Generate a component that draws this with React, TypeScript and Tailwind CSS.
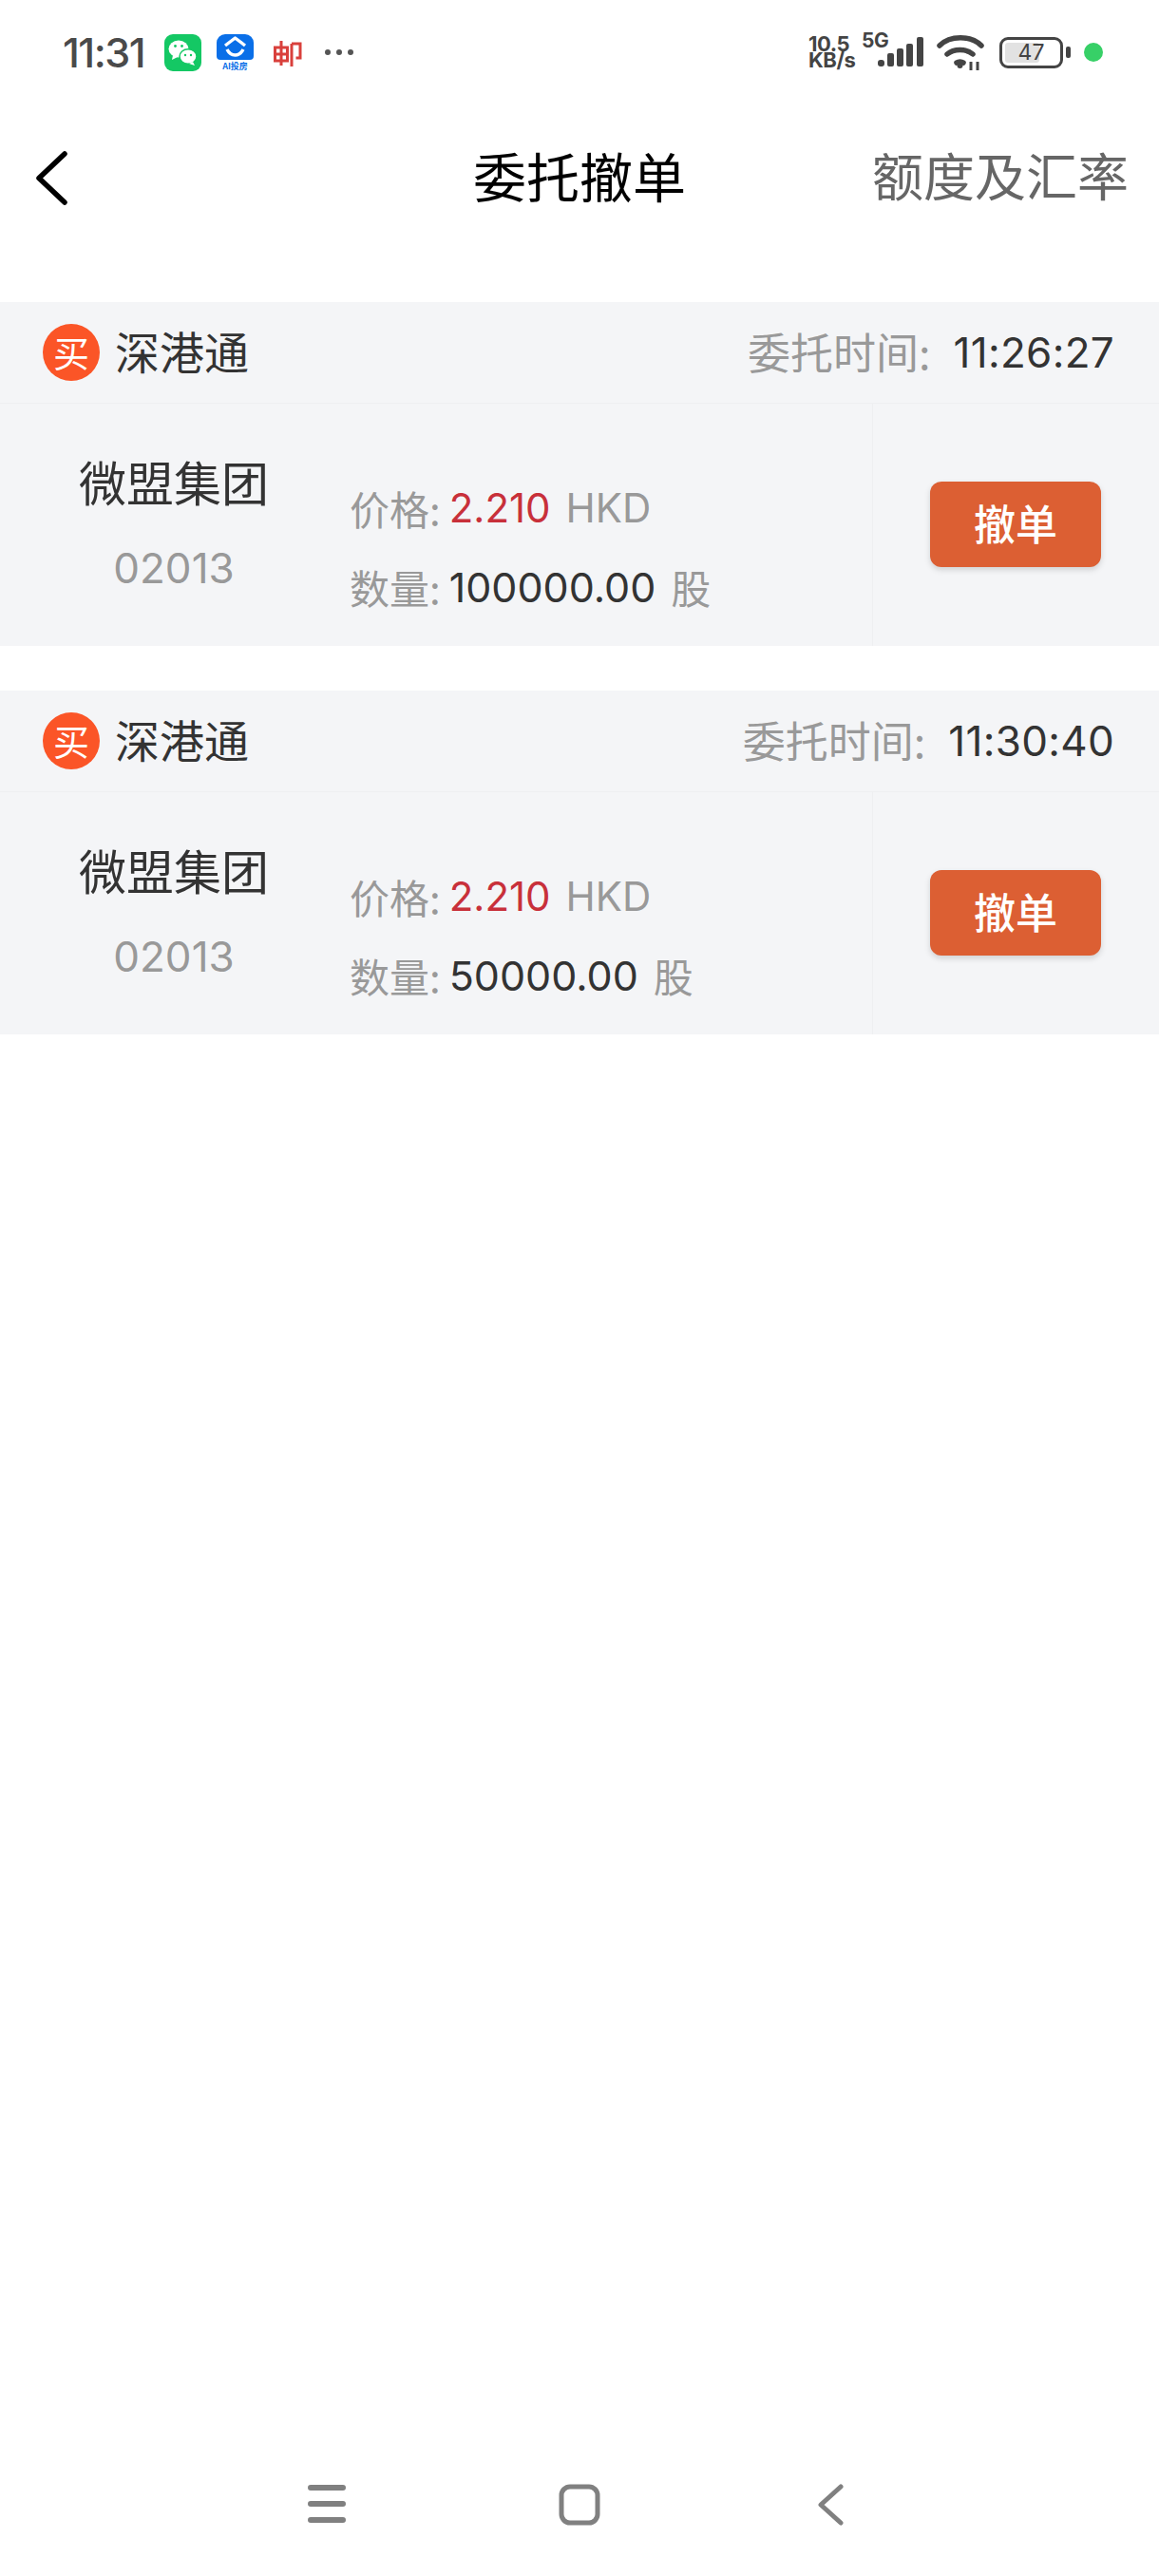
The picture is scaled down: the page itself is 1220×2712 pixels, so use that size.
const CJK = "font-['Noto_Sans_CJK_SC','Noto_Sans',sans-serif]";
const NUM = "font-['Inter','Noto_Sans_CJK_SC',sans-serif]";

const WeChatIcon = () => (
  <svg width="39" height="39" viewBox="0 0 39 39">
    <rect width="39" height="39" rx="9" fill="#14c864" />
    <ellipse cx="15" cy="15.500" rx="10.500" ry="9" fill="#fff" />
    <path d="M9 22l-1 5 6-3z" fill="#fff" />
    <ellipse cx="25" cy="23.500" rx="9" ry="7.800" fill="#fff" stroke="#14c864" strokeWidth="1.500" />
    <path d="M30 29l2 4-6-2z" fill="#fff" />
    <circle cx="11.500" cy="12.500" r="1.400" fill="#14c864" />
    <circle cx="18.500" cy="12.500" r="1.400" fill="#14c864" />
    <circle cx="22" cy="22" r="1.200" fill="#14c864" />
    <circle cx="28" cy="22" r="1.200" fill="#14c864" />
  </svg>
);

const AiHouseIcon = () => (
  <div className="relative w-[39px] h-[39px] rounded-[9px] bg-white overflow-hidden">
    <div className="h-[27px] bg-[#0a6fe8] rounded-b-[4px]" />
    <svg className="absolute left-0 top-0" width="39" height="28" viewBox="0 0 39 28">
      <path d="M9 12l10.500-8 10.500 8M11 16c2 4 5 6 8.500 6s6.500-2 8.500-6" fill="none" stroke="#fff" strokeWidth="3.400" strokeLinejoin="round" />
    </svg>
    <p className={`${CJK} absolute left-0 right-0 bottom-[0px] text-center text-[9px] leading-[11px] font-bold text-[#0a6fe8]`}>
      AI投房
    </p>
  </div>
);

const PostIcon = () => (
  <svg width="39" height="39" viewBox="0 0 39 39">
    <rect width="39" height="39" rx="9" fill="#fff" />
    <g fill="none" stroke="#d9403c" strokeWidth="3">
      <path d="M6.500 14h13v14h-13zM6.500 21h13M13 7v26" />
      <path d="M24 10h9v15h-4.500M24 10v24" />
    </g>
  </svg>
);

const StatusBar = () => (
  <div className="h-[110px] flex items-center pl-[66px] text-[#444]">
    <span className={`${NUM} text-[43px] font-medium leading-none tracking-[-1.5px] w-[107px] text-[#4a4a4a]`}>11:31</span>
    <WeChatIcon />
    <div className="ml-[16px]">
      <AiHouseIcon />
    </div>
    <div className="ml-[16px]">
      <PostIcon />
    </div>
    <div className="ml-[20px] flex gap-[6px]">
      <span className="size-[6px] rounded-full bg-[#555]" />
      <span className="size-[6px] rounded-full bg-[#555]" />
      <span className="size-[6px] rounded-full bg-[#555]" />
    </div>
    <p className={`${NUM} ml-[479px] w-[56px] font-bold text-[22px] leading-[17px] tracking-[-0.5px] text-[#444]`}>
      10.5
      <br />
      KB/s
    </p>
    <div className="relative w-[65px] h-[40px]">
      <span className={`${NUM} absolute left-0 top-[-1px] text-[21px] leading-[18px] font-bold tracking-[-0.5px]`}>5G</span>
      <svg className="absolute left-[17px] top-[3px]" width="48" height="34" viewBox="0 0 48 34" fill="#444">
        <rect x="0" y="25" width="7" height="7" rx="3" />
        <rect x="10" y="18" width="7" height="14" rx="2" />
        <rect x="20" y="13" width="7" height="19" rx="2" />
        <rect x="30" y="8" width="7" height="24" rx="2" />
        <rect x="41" y="1" width="7" height="31" rx="2" />
      </svg>
    </div>
    <svg className="ml-[14px]" width="50" height="38" viewBox="0 0 50 38" fill="none" stroke="#444" strokeWidth="5.500" strokeLinecap="round">
      <path d="M3 12C14 1 36 1 47 12" />
      <path d="M11 21c7-6 20-6 27 0" />
      <path d="M21 30c2-1.500 5-1.500 7 0" />
      <circle cx="24.500" cy="33" r="3" fill="#444" stroke="none" />
      <path d="M36 29v9M43 29v9" strokeWidth="3" strokeLinecap="butt" />
    </svg>
    <div className="ml-[16px] w-[67px] h-[33px] rounded-[9px] border-[3px] border-[#444] p-[3px] relative flex items-center">
      <div className="h-full w-[36px] rounded-[3px] bg-[#e2e2e2]" />
      <span className={`${NUM} absolute inset-0 text-center text-[23px] leading-[27px] text-[#444]`}>47</span>
    </div>
    <div className="ml-[3px] w-[5px] h-[12px] rounded-[2px] bg-[#444]" />
    <div className="ml-[14px] size-[20px] rounded-full bg-[#37d067]" />
  </div>
);

const NavBar = () => (
  <div className="h-[154px] grid grid-cols-[1fr_auto_1fr] items-center">
    <svg className="ml-[36px]" width="38" height="60" viewBox="0 0 38 60" fill="none" stroke="#000" strokeWidth="5.500" strokeLinecap="round" strokeLinejoin="round">
      <path d="M32 5L5 30.500 32 56" />
    </svg>
    <h1 className={`${CJK} pb-[6px] text-[56px] leading-none text-black`}>委托撤单</h1>
    <p className={`${CJK} justify-self-end pb-[6px] pr-[32px] text-[54px] leading-none text-[#666]`}>额度及汇率</p>
  </div>
);

type Order = { time: string; qty: string };

const OrderCard = ({ time, qty }: Order) => (
  <div className={`${CJK} h-[362px] bg-[#f4f5f7] flex flex-col`}>
    <div className="h-[107px] shrink-0 border-b border-[#eeeff1] flex items-center pl-[45px] pr-[47px]">
      <div className="size-[60px] rounded-full bg-[#fb5527] flex items-center justify-center pb-[3px] text-[38px] leading-none text-white">
        买
      </div>
      <span className="ml-[16px] pb-[5px] text-[47px] leading-none text-[#333]">深港通</span>
      <span className="ml-auto pb-[3px] text-[45px] leading-none text-[#999]">委托时间:</span>
      <span className={`${NUM} ml-[24px] pb-[1px] text-[44px] leading-none tracking-[0.3px] text-[#333]`}>{time}</span>
    </div>
    <div className="flex-1 flex">
      <div className="w-[366px] flex flex-col items-center pt-[49px]">
        <span className="text-[50px] leading-[64px] text-[#333]">微盟集团</span>
        <span className={`${NUM} mt-[33px] text-[44px] leading-[54px] text-[#999]`}>02013</span>
      </div>
      <div className="w-[553px] border-r border-[#eeeff1] pl-[2px] pt-[84px] flex flex-col gap-[31px]">
        <div className="flex items-center h-[52px]">
          <span className="text-[42px] leading-none text-[#999]">价格:</span>
          <span className={`${NUM} ml-[9px] text-[42px] leading-none text-[#c8303a]`}>2.210</span>
          <span className={`${NUM} ml-[16px] text-[42px] leading-none text-[#999]`}>HKD</span>
        </div>
        <div className="flex items-center h-[52px]">
          <span className="text-[42px] leading-none text-[#999]">数量:</span>
          <span className={`${NUM} ml-[9px] text-[43px] leading-none text-[#333]`}>{qty}</span>
          <span className="ml-[16px] text-[42px] leading-none text-[#999]">股</span>
        </div>
      </div>
      <div className="flex-1 flex items-center pl-[60px]">
        <button className="w-[180px] h-[90px] rounded-[12px] bg-[#dc5f33] mb-[1px] pb-[4px] text-white text-[44px] leading-none font-medium shadow-[0_3px_6px_rgba(0,0,0,0.15)]">
          撤单
        </button>
      </div>
    </div>
  </div>
);

const BottomBar = () => (
  <div className="mt-auto h-[138px] flex items-start pt-[41px] pl-[324px]">
    <svg width="40" height="42" viewBox="0 0 40 42" fill="none" stroke="#808080" strokeWidth="6" strokeLinecap="round">
      <path d="M3 4h34M3 21h34M3 38h34" />
    </svg>
    <svg className="ml-[224px]" width="44" height="44" viewBox="0 0 44 44" fill="none" stroke="#808080" strokeWidth="5">
      <rect x="3" y="3" width="38" height="38" rx="9" />
    </svg>
    <svg className="ml-[227px]" width="30" height="44" viewBox="0 0 30 44" fill="none" stroke="#808080" strokeWidth="5" strokeLinecap="round" strokeLinejoin="round">
      <path d="M26 3L5 22l21 19" />
    </svg>
  </div>
);

export default function App() {
  return (
    <div className="w-[1220px] h-[2712px] bg-white flex flex-col">
      <StatusBar />
      <NavBar />
      <div className="mt-[54px] flex flex-col gap-[47px]">
        <OrderCard time="11:26:27" qty="100000.00" />
        <OrderCard time="11:30:40" qty="50000.00" />
      </div>
      <BottomBar />
    </div>
  );
}
